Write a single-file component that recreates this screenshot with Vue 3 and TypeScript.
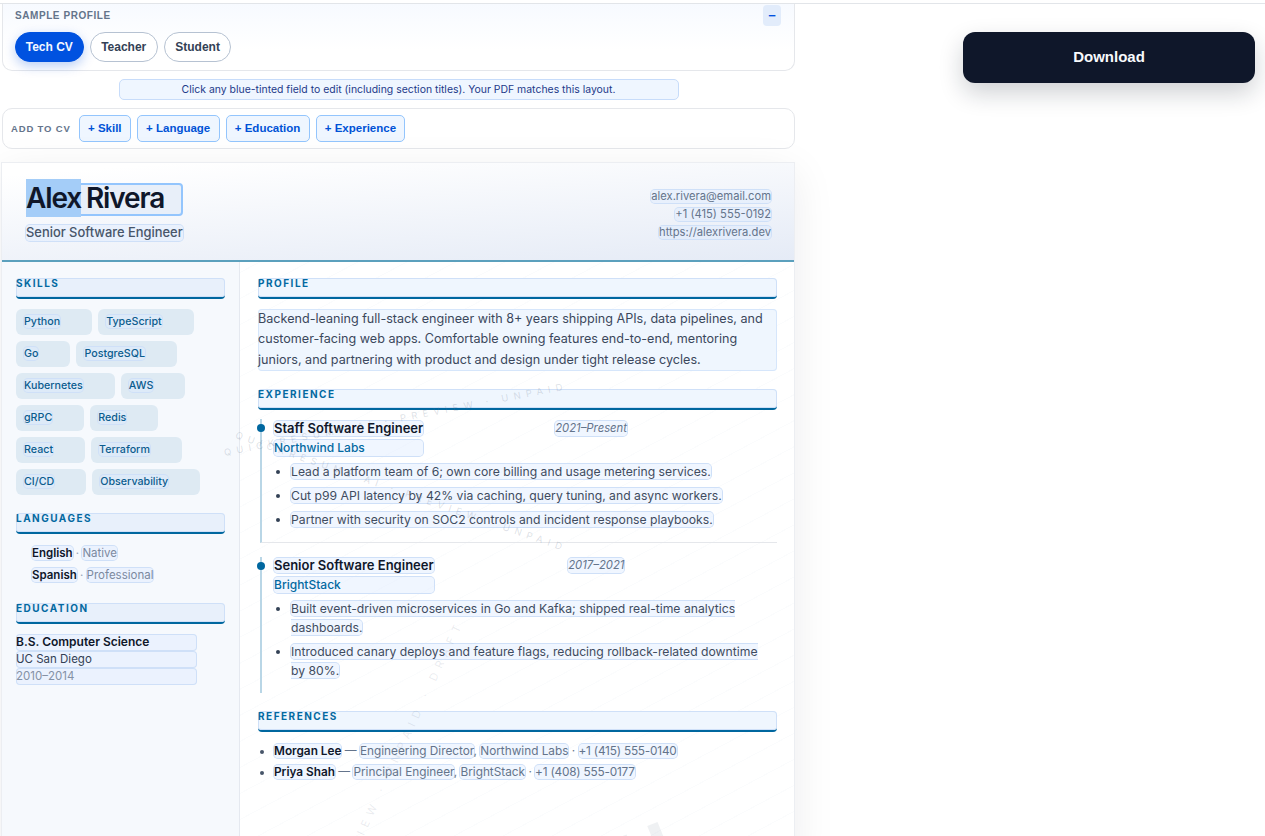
<script setup lang="ts">
interface Job {
  title: string;
  company: string;
  dates: string;
  bullets: string[];
}

const samples = ['Tech CV', 'Teacher', 'Student'];
const addButtons = ['Skill', 'Language', 'Education', 'Experience'];
const skills = [
  'Python', 'TypeScript', 'Go', 'PostgreSQL', 'Kubernetes', 'AWS',
  'gRPC', 'Redis', 'React', 'Terraform', 'CI/CD', 'Observability',
];
const languages = [
  { name: 'English', level: 'Native' },
  { name: 'Spanish', level: 'Professional' },
];
const jobs: Job[] = [
  {
    title: 'Staff Software Engineer',
    company: 'Northwind Labs',
    dates: '2021–Present',
    bullets: [
      'Lead a platform team of 6; own core billing and usage metering services.',
      'Cut p99 API latency by 42% via caching, query tuning, and async workers.',
      'Partner with security on SOC2 controls and incident response playbooks.',
    ],
  },
  {
    title: 'Senior Software Engineer',
    company: 'BrightStack',
    dates: '2017–2021',
    bullets: [
      'Built event-driven microservices in Go and Kafka; shipped real-time analytics dashboards.',
      'Introduced canary deploys and feature flags, reducing rollback-related downtime by 80%.',
    ],
  },
];
const references = [
  { name: 'Morgan Lee', role: 'Engineering Director', org: 'Northwind Labs', phone: '+1 (415) 555-0140' },
  { name: 'Priya Shah', role: 'Principal Engineer', org: 'BrightStack', phone: '+1 (408) 555-0177' },
];
const watermark = 'QUICKRESUME AI · PREVIEW · UNPAID';
</script>

<template>
  <div class="page">
    <div class="left">
      <section class="panel samples">
        <div class="samples-head">
          <span class="samples-label">SAMPLE PROFILE</span>
          <button class="collapse">−</button>
        </div>
        <div class="samples-row">
          <button
            v-for="(s, i) in samples"
            :key="s"
            :class="['pill', i === 0 ? 'pill-active' : '']"
          >{{ s }}</button>
        </div>
      </section>

      <div class="note-wrap">
        <div class="note">Click any blue-tinted field to edit (including section titles). Your PDF matches this layout.</div>
      </div>

      <section class="panel add-bar">
        <span class="add-label">ADD TO CV</span>
        <button v-for="b in addButtons" :key="b" class="add-btn">+ {{ b }}</button>
      </section>

      <article class="cv">
        <header class="cv-head">
          <div class="head-left">
            <div class="name"><span class="selected">Alex</span> Rivera</div>
            <div class="job-title field">Senior Software Engineer</div>
          </div>
          <div class="contact">
            <span class="field">alex.rivera@email.com</span>
            <span class="field">+1 (415) 555-0192</span>
            <span class="field">https://alexrivera.dev</span>
          </div>
        </header>

        <div class="cv-body">
          <aside class="side">
            <h3 class="sec sec-side">SKILLS</h3>
            <div class="chips">
              <span v-for="s in skills" :key="s" class="chip"><span class="field">{{ s }}</span></span>
            </div>

            <h3 class="sec sec-side sec-lang">LANGUAGES</h3>
            <ul class="langs">
              <li v-for="l in languages" :key="l.name">
                <b class="field">{{ l.name }}</b> · <span class="field muted">{{ l.level }}</span>
              </li>
            </ul>

            <h3 class="sec sec-side sec-edu">EDUCATION</h3>
            <div class="edu">
              <div class="field edu-line"><b>B.S. Computer Science</b></div>
              <div class="field edu-line">UC San Diego</div>
              <div class="field edu-line muted">2010–2014</div>
            </div>
          </aside>

          <main class="main">
            <h3 class="sec">PROFILE</h3>
            <p class="summary">Backend-leaning full-stack engineer with 8+ years shipping APIs, data pipelines, and customer-facing web apps. Comfortable owning features end-to-end, mentoring juniors, and partnering with product and design under tight release cycles.</p>

            <h3 class="sec sec-exp">EXPERIENCE</h3>
            <div v-for="(job, i) in jobs" :key="job.title" :class="['job', i > 0 ? 'job-next' : 'job-first']">
              <span class="dot"></span>
              <div class="job-row">
                <div class="job-left">
                  <div class="field job-name">{{ job.title }}</div>
                  <div class="field job-company">{{ job.company }}</div>
                </div>
                <span class="field job-dates">{{ job.dates }}</span>
                <span class="job-spacer"></span>
              </div>
              <ul class="bullets">
                <li v-for="b in job.bullets" :key="b"><span class="field">{{ b }}</span></li>
              </ul>
            </div>

            <h3 class="sec sec-ref">REFERENCES</h3>
            <ul class="refs">
              <li v-for="r in references" :key="r.name">
                <b class="field">{{ r.name }}</b> — <span class="field">{{ r.role }}</span>, <span class="field">{{ r.org }}</span> · <span class="field ref-phone">{{ r.phone }}</span>
              </li>
            </ul>
          </main>
        </div>

        <!-- watermark sits over the sheet -->
        <div class="wm wm-a">{{ watermark }}</div>
        <div class="wm wm-b">{{ watermark }}</div>
        <div class="wm wm-c">PREVIEW · UNPAID · DRAFT</div>
        <div class="wm-big">U</div>
      </article>
    </div>

    <div class="right">
      <button class="download">Download</button>
    </div>
  </div>
</template>

<style>
html, body {
  margin: 0;
  background: #fff;
  overflow: hidden;
}
</style>

<style scoped>
.page {
  display: flex;
  height: 832px;
  margin-top: 3px;
  border-top: 1px solid #e2e5e9;
  overflow: hidden;
  font-family: Inter, "Liberation Sans", sans-serif;
  color: #334155;
}

.left {
  width: 793px;
  margin-left: 2px;
  flex-shrink: 0;
}

.right {
  flex: 1;
  padding: 28px 10px 0 168px;
}

.download {
  display: block;
  width: 100%;
  height: 51px;
  padding-bottom: 3px;
  border: 0;
  border-radius: 12px;
  background: #0f172a;
  color: #f8fafc;
  font: 700 15px "Liberation Sans", sans-serif;
  box-shadow: 0 10px 25px rgba(15, 23, 42, 0.2);
}

.panel {
  box-sizing: border-box;
  border: 1px solid #e5e7eb;
  border-radius: 10px;
  background: #fff;
}

.samples {
  height: 67px;
  padding: 1px 12px 0;
  border-top: 0;
  border-radius: 0 0 10px 10px;
  background: linear-gradient(180deg, #f7faff, #fff 70%);
}

.samples-head {
  display: flex;
  justify-content: space-between;
  align-items: center;
  height: 21px;
  padding-right: 1px;
}

.samples-label {
  font: 700 10px "Liberation Sans", sans-serif;
  letter-spacing: 0.57px;
  color: #64748b;
}

.collapse {
  width: 18px;
  height: 21px;
  padding: 0;
  border: 0;
  border-radius: 4px;
  background: #e2ecfb;
  color: #0052e0;
  font: 700 13px "Liberation Sans", sans-serif;
}

.samples-row {
  display: flex;
  gap: 6px;
  margin-top: 6px;
}

.pill {
  height: 30px;
  padding: 0 10.5px;
  border: 1px solid #b6c2d2;
  border-radius: 15px;
  background: #fff;
  color: #334155;
  font: 700 12px "Liberation Sans", sans-serif;
}

.pill-active {
  padding: 0 9.75px;
  border-color: #0052e0;
  background: #0052e0;
  color: #f4f8ff;
  box-shadow: 0 4px 12px rgba(0, 82, 224, 0.28);
}

.note-wrap {
  display: flex;
  justify-content: center;
  padding-top: 8px;
}

.note {
  box-sizing: border-box;
  width: 560px;
  height: 21px;
  border: 1px solid #c7dcfa;
  border-radius: 5px;
  background: #eff6ff;
  color: #1e3a8a;
  font-size: 10.45px;
  line-height: 19px;
  text-align: center;
}

.add-bar {
  display: flex;
  align-items: center;
  gap: 6px;
  height: 41px;
  margin-top: 8px;
  padding: 0 8px;
}

.add-label {
  margin-right: 2px;
  font: 700 9.5px "Liberation Sans", sans-serif;
  letter-spacing: 0.85px;
  color: #64748b;
}

.add-btn {
  height: 27px;
  padding: 0 8.25px 1px;
  border: 1px solid #93c5fd;
  border-radius: 5px;
  background: #eff6ff;
  color: #0052d6;
  font: 700 11.5px "Liberation Sans", sans-serif;
}

.cv {
  position: relative;
  margin: 13px 0 0 -1px;
  height: 700px;
  border: 1px solid #eceef2;
  border-bottom: 0;
  background: repeating-linear-gradient(-28deg, #fff 0 22px, #fbfcfd 22px 23px);
  box-shadow: 0 10px 40px rgba(15, 23, 42, 0.08);
  overflow: hidden;
}

.field {
  border-radius: 4px;
  background: rgba(219, 234, 254, 0.42);
  box-shadow: 0 0 0 1px #cfe0f8;
}

.cv-head {
  display: flex;
  justify-content: space-between;
  height: 99px;
  box-sizing: border-box;
  padding: 20px 23px 0 24px;
  border-bottom: 2px solid #5ba0bd;
  background: linear-gradient(176deg, #fff 8%, #e5ebf6 100%);
}

.head-left {
  display: flex;
  flex-direction: column;
  align-items: flex-start;
}

.name {
  box-sizing: border-box;
  display: flex;
  align-items: center;
  gap: 5px;
  width: 157px;
  height: 33px;
  padding-bottom: 3px;
  border: 2px solid #93c5fd;
  border-radius: 4px;
  background: #e8eff9;
  color: #0f172a;
  font-size: 28px;
  font-weight: 600;
  letter-spacing: -1.15px;
  white-space: nowrap;
}

.selected {
  margin-left: -2px;
  padding: 2px 0;
  background: #a4cdf8;
}

.job-title {
  margin-top: 9px;
  font-size: 12.9px;
  font-weight: 500;
  line-height: 16px;
  color: #475569;
  white-space: nowrap;
}

.contact {
  display: flex;
  flex-direction: column;
  align-items: flex-end;
  gap: 5px;
  margin-top: 7px;
  font-size: 11.2px;
  line-height: 13px;
  color: #64748b;
}

.cv-body {
  display: flex;
}

.side {
  box-sizing: border-box;
  width: 238px;
  height: 600px;
  padding: 16px 14px 0 14px;
  border-right: 1px solid #e5e9f0;
  background: #f6f9fd;
}

.main {
  flex: 1;
  padding: 16px 17px 0 18px;
}

.sec {
  box-sizing: border-box;
  height: 21px;
  margin: 0;
  border-bottom: 2px solid #00679f;
  border-radius: 4px;
  background: #eff6fe;
  box-shadow: inset 0 0 0 1px #cfe0f8;
  color: #0369a1;
  font-size: 10px;
  font-weight: 700;
  letter-spacing: 1.5px;
  line-height: 11px;
}

.sec-side {
  background: #e8f0fb;
}

.chips {
  display: flex;
  flex-wrap: wrap;
  gap: 6px;
  margin-top: 10px;
}

.chip {
  display: block;
  box-sizing: border-box;
  height: 26px;
  padding: 5.5px 32px 0 8px;
  border-radius: 6px;
  background: #deeaf3;
  color: #0b5c8e;
  font-size: 10.7px;
  font-weight: 500;
  line-height: 14px;
}

.sec-lang {
  margin-top: 18px;
}

.langs {
  margin: 11px 0 0;
  padding: 0 0 0 16px;
  list-style: none;
  font-size: 11.5px;
  color: #94a3b8;
}

.langs li {
  height: 22px;
  line-height: 16px;
}

.langs b {
  color: #0f172a;
  font-weight: 600;
}

.muted {
  color: #64748b;
  font-weight: 400;
}

.langs .muted {
  color: #7b899e;
}

.sec-edu {
  margin-top: 14px;
}

.edu {
  width: 181px;
  margin-top: 10px;
  font-size: 11.5px;
  color: #334155;
}

.edu-line {
  box-sizing: border-box;
  height: 17px;
  line-height: 16px;
  box-shadow: inset 0 0 0 1px #cfe0f8;
}

.edu-line b {
  color: #0f172a;
  font-size: 12px;
  font-weight: 600;
}

.edu-line.muted {
  color: #8491a5;
}

.summary {
  box-sizing: border-box;
  height: 62px;
  margin: 10px 0 0;
  border-radius: 4px;
  background: #eff6fe;
  box-shadow: inset 0 0 0 1px #d6e6fb;
  font-size: 12.6px;
  line-height: 20.4px;
  color: #3b485c;
}

.sec-exp {
  margin-top: 18px;
}

.job {
  position: relative;
  margin: 9px 0 0 2px;
  padding: 0 0 8px 12px;
  border-left: 2px solid #b9d6e6;
}

.job-first {
  border-bottom: 1px solid #e5e7eb;
}

.job-next {
  margin-top: 14px;
}

.dot {
  position: absolute;
  left: -5px;
  top: 5px;
  width: 8px;
  height: 8px;
  border-radius: 50%;
  background: #00679f;
}

.job-row {
  display: flex;
  justify-content: space-between;
  align-items: flex-start;
  padding-top: 1.5px;
}

.job-name {
  font-size: 13px;
  font-weight: 600;
  line-height: 15px;
  color: #0f172a;
  white-space: nowrap;
}

.job-company {
  margin-top: 4px;
  font-size: 12px;
  font-weight: 500;
  line-height: 16px;
  color: #0369a1;
}

.job-dates {
  font-size: 11.3px;
  font-style: italic;
  line-height: 15px;
  color: #64748b;
}

.job-spacer {
  width: 18px;
}

.bullets {
  margin: 6px 0 0;
  padding: 0 4px 0 17px;
  font-size: 12.2px;
  line-height: 19px;
  color: #3f4c60;
}

.bullets li {
  margin-bottom: 5px;
}

.bullets li::marker {
  color: #334155;
}

.sec-ref {
  margin-top: 18px;
}

.refs {
  margin: 9px 0 0;
  padding: 0 0 0 16px;
  font-size: 11.8px;
  line-height: 21px;
  color: #64748b;
}

.refs b {
  color: #0f172a;
  font-weight: 600;
}

.refs li::marker {
  color: #475569;
}

.ref-phone {
  letter-spacing: -0.2px;
}

.wm {
  position: absolute;
  color: rgba(100, 116, 139, 0.22);
  font-size: 9.5px;
  letter-spacing: 5.3px;
  white-space: nowrap;
  pointer-events: none;
  transform-origin: left center;
}

.wm-a {
  left: 222px;
  top: 284px;
  transform: rotate(-11deg);
}

.wm-b {
  left: 234px;
  top: 266px;
  transform: rotate(19deg);
}

.wm-c {
  left: 336px;
  top: 712px;
  color: rgba(100, 116, 139, 0.14);
  font-size: 11px;
  letter-spacing: 6px;
  transform: rotate(-65deg);
}

.wm-big {
  position: absolute;
  left: 618px;
  top: 652px;
  color: rgba(100, 116, 139, 0.1);
  font-size: 74px;
  font-weight: 700;
  line-height: 80px;
  transform: rotate(-22deg);
  pointer-events: none;
}
</style>
